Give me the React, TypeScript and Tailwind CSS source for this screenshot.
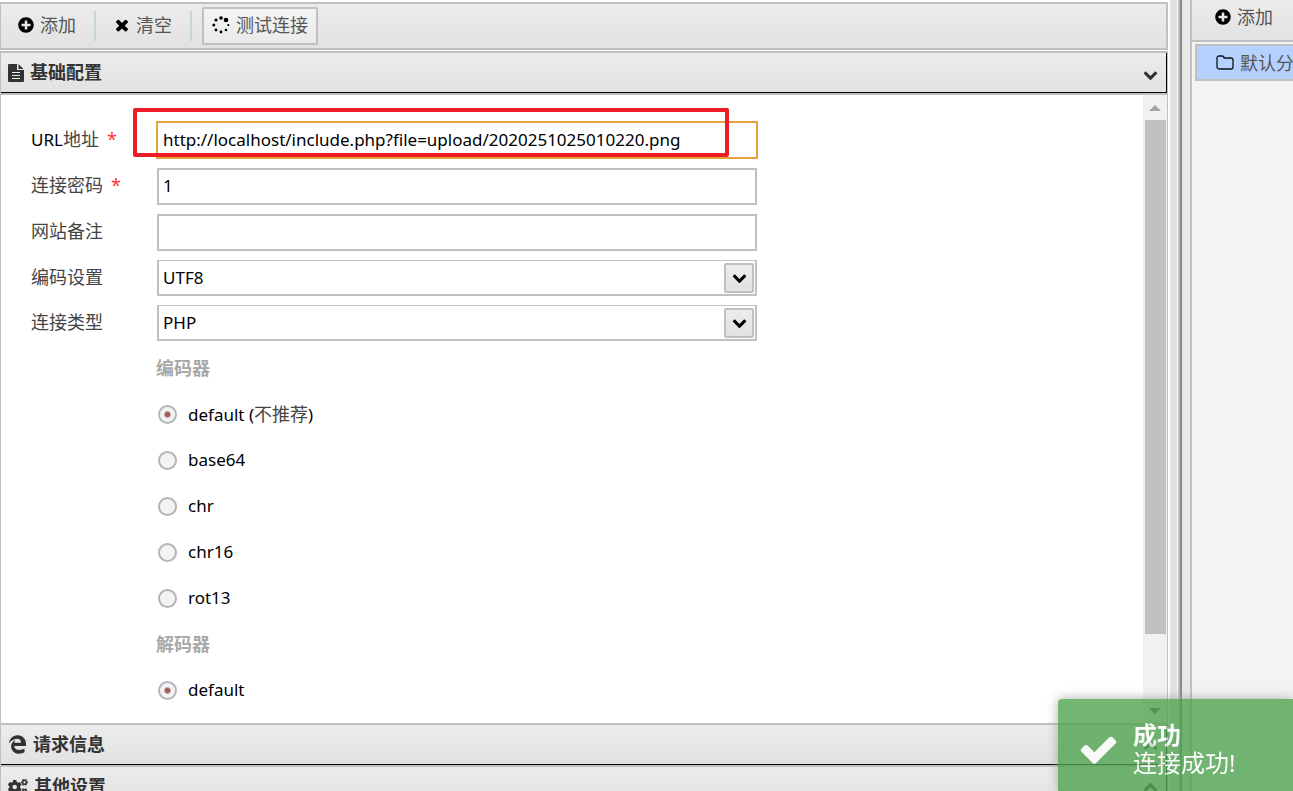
import type { ReactNode } from "react";
import { FaCogs, FaEdgeLegacy, FaPlusCircle } from "react-icons/fa";

const encoders = [{ name: "default", note: "不推荐" }, { name: "base64" }, { name: "chr" }, { name: "chr16" }, { name: "rot13" }];
const decoders = [{ name: "default" }];

function Icon({ d, size, className }: { d: string; size: number; className?: string }) {
  return (
    <svg width={size} height={size} viewBox="0 0 1792 1792" fill="currentColor" className={className}>
      <path d={d} />
    </svg>
  );
}

const timesPath =
  "M1490 1322q0 40-28 68l-136 136q-28 28-68 28t-68-28l-294-294-294 294q-28 28-68 28t-68-28l-136-136q-28-28-28-68t28-68l294-294-294-294q-28-28-28-68t28-68l136-136q28-28 68-28t68 28l294 294 294-294q28-28 68-28t68 28l136 136q28 28 28 68t-28 68l-294 294 294 294q28 28 28 68z";
const checkPath =
  "M1671 566q0 40-28 68l-724 724-136 136q-28 28-68 28t-68-28l-136-136-362-362q-28-28-28-68t28-68l136-136q28-28 68-28t68 28l294 295 656-657q28-28 68-28t68 28l136 136q28 28 28 68z";
const chevronPath =
  "M1683 808l-742 741q-19 19-45 19t-45-19l-742-741q-19-19-19-45.5t19-45.5l166-165q19-19 45-19t45 19l531 531 531-531q19-19 45-19t45 19l166 165q19 19 19 45.5t-19 45.5z";

function Spinner() {
  return (
    <svg width="18" height="18" viewBox="0 0 18 18" className="text-black" fill="currentColor">
      <circle cx="9" cy="2" r="1.8" />
      <circle cx="14" cy="4" r="2.3" />
      <circle cx="16.300" cy="9" r="1.1" />
      <circle cx="14" cy="14" r="1.3" />
      <circle cx="9" cy="16" r="1.4" />
      <circle cx="4" cy="14" r="1.4" />
      <circle cx="1.800" cy="9" r="1.5" />
      <circle cx="4" cy="4" r="1.600" />
    </svg>
  );
}

function FileText() {
  return (
    <svg width="16" height="18" viewBox="0 0 16 18">
      <path d="M1 0h8v6h7v11a1 1 0 0 1-1 1H1a1 1 0 0 1-1-1V1a1 1 0 0 1 1-1zM10.500 0 15.500 5h-5z" fill="#333" />
      <path d="M4 8.500h8M4 11.500h8M4 14.500h8" stroke="#eee" strokeWidth="1.200" />
    </svg>
  );
}

function Folder() {
  return (
    <svg width="18" height="18" viewBox="0 0 18 18" fill="none" stroke="#111" strokeWidth="1.300" strokeLinejoin="round">
      <path d="M1 4a2 2 0 0 1 2-2h3a2 2 0 0 1 2 2h7a2 2 0 0 1 2 2v7a2 2 0 0 1-2 2H3a2 2 0 0 1-2-2z" />
    </svg>
  );
}

function ToolButton({ icon, text }: { icon: ReactNode; text: string }) {
  return (
    <button type="button" className="flex h-10 items-center gap-1.5 pr-3 pl-3 pb-0.5 text-lg text-[#555]">
      <span className="flex w-4 justify-center text-black">{icon}</span>
      {text}
    </button>
  );
}

function PanelHeader({ icon, title, open }: { icon: ReactNode; title: string; open?: boolean }) {
  return (
    <div className="shrink-0 border-y-2 border-r border-[#c0c0c0]">
      <button
        type="button"
        className="flex h-10 w-full items-center gap-1.5 border-r border-b border-black bg-linear-to-b from-[#ececec] to-[#e2e2e2] pl-[7px] text-lg font-bold text-[#333]"
      >
        {icon}
        <span className="flex-1 pb-0.5 text-left">{title}</span>
        <span className="mt-1 mr-2">
          <Icon d={chevronPath} size={15} className={open ? "" : "rotate-180"} />
        </span>
      </button>
    </div>
  );
}

function TextRow({ id, label, value, required, focused }: { id: string; label: ReactNode; value: string; required?: boolean; focused?: boolean }) {
  return (
    <div className="flex h-[46px] items-center">
      <label htmlFor={id} className="w-[126px] shrink-0 pb-0.5 text-lg text-[#444]">
        {label}
        {required && <span className="ml-2 text-[#f33]">*</span>}
      </label>
      <input
        id={id}
        defaultValue={value}
        className={
          focused
            ? "h-9 w-[600px] border border-[#c0c0c0] px-[5px] pb-0.5 text-black outline-2 -outline-offset-1 outline-[#e5a33a]"
            : "h-[37px] w-[600px] border-2 border-[#c0c0c0] px-1 pb-0.5 text-black outline-none"
        }
      />
    </div>
  );
}

function SelectRow({ id, label, value }: { id: string; label: string; value: string }) {
  return (
    <div className="flex h-[45px] items-center">
      <label htmlFor={id} className="w-[126px] shrink-0 pb-0.5 text-lg text-[#444]">
        {label}
      </label>
      <div className="relative w-[600px]">
        <select id={id} className="block h-9 w-full appearance-none border-2 border-t border-[#c0c0c0] bg-white px-1 pt-0.5 text-black">
          <option>{value}</option>
        </select>
        <span className="pointer-events-none absolute top-[3px] right-[3px] flex h-[30px] w-[30px] items-center justify-center rounded-xs border-2 border-[#c0c0c0] bg-linear-to-b from-[#ececec] to-[#e2e2e2] text-black">
          <Icon d={chevronPath} size={15} />
        </span>
      </div>
    </div>
  );
}

function RadioGroup({ name, title, items }: { name: string; title: string; items: { name: string; note?: string }[] }) {
  return (
    <fieldset className="pl-[125px]">
      <legend className="contents">
        <span className="flex h-[46px] items-center text-lg font-bold text-[#a8a8a8]">{title}</span>
      </legend>
      {items.map((item, i) => (
        <label key={item.name} className="flex h-[46px] items-center gap-[11px] pl-0.5 text-black">
          <input
            type="radio"
            name={name}
            defaultChecked={i === 0}
            className="h-[19px] w-[19px] appearance-none rounded-full border-2 border-[#b8b3b3] bg-[#f3f3f3] checked:border-[#b4b6bf] checked:bg-[radial-gradient(circle,#a05a5a_0_2px,#f3f3f3_4px)]"
          />
          <span>
            {item.name}
            {item.note && (
              <>
                {" "}
                (<span className="text-lg text-[#444]">{item.note}</span>)
              </>
            )}
          </span>
        </label>
      ))}
    </fieldset>
  );
}

function Scrollbar() {
  return (
    <div className="flex w-6 shrink-0 flex-col items-center bg-[#f1f1f1] px-px">
      <div className="flex h-[25px] items-center">
        <svg width="12" height="6" viewBox="0 0 12 6" fill="#a3a3a3">
          <path d="M6 0 12 6H0z" />
        </svg>
      </div>
      <div className="w-full flex-1 pl-px">
        <div className="h-[89%] bg-[#c1c1c1]" />
      </div>
      <div className="flex h-[25px] items-center">
        <svg width="12" height="6" viewBox="0 0 12 6" fill="#505050">
          <path d="M0 0H12L6 6z" />
        </svg>
      </div>
    </div>
  );
}

export default function App() {
  return (
    <div className="flex h-screen overflow-hidden bg-white font-['Noto_Sans','Noto_Sans_CJK_SC',sans-serif] text-[17px]">
      <main className="flex min-w-0 flex-1 flex-col pt-0.5">
        <div className="mb-px flex h-12 shrink-0 items-center border-2 border-l border-[#c0c0c0] bg-linear-to-b from-[#ececec] to-[#e2e2e2] pl-[5px]">
          <ToolButton icon={<FaPlusCircle size={16} />} text="添加" />
          <div className="mx-1.5 h-[30px] w-0.5 bg-[#c5d5da]" />
          <ToolButton icon={<Icon d={timesPath} size={18} className="shrink-0" />} text="清空" />
          <div className="mx-1.5 h-[30px] w-0.5 bg-[#c5d5da]" />
          <button
            type="button"
            className="ml-1 flex h-[38px] items-center gap-1.5 rounded-xs border-2 border-[#c0c0c0] bg-linear-to-b from-[#f3f3f3] to-[#ebebeb] px-2 pb-0.5 text-lg text-[#555]"
          >
            <Spinner />
            测试连接
          </button>
        </div>

        <div className="flex min-h-0 flex-1 flex-col overflow-hidden border-l border-[#c0c0c0]">
          <PanelHeader icon={<FileText />} title="基础配置" open />
          <div className="flex h-[628px] shrink-0 overflow-hidden border-r border-[#c0c0c0]">
            <form className="relative min-w-0 flex-1 pt-[22px] pl-[30px]">
              <TextRow
                id="url"
                label={
                  <>
                    <span className="text-[17px] text-black">URL</span>地址
                  </>
                }
                value="http://localhost/include.php?file=upload/2020251025010220.png"
                required
                focused
              />
              <TextRow id="pwd" label="连接密码" value="1" required />
              <TextRow id="note" label="网站备注" value="" />
              <SelectRow id="encode" label="编码设置" value="UTF8" />
              <SelectRow id="type" label="连接类型" value="PHP" />
              <RadioGroup name="encoder" title="编码器" items={encoders} />
              <RadioGroup name="decoder" title="解码器" items={decoders} />
              <div className="pointer-events-none absolute top-[13px] left-[132px] h-[49px] w-[596px] rounded-xs border-4 border-[#ee1c25]" />
            </form>
            <Scrollbar />
          </div>
          <PanelHeader icon={<FaEdgeLegacy size={19} />} title="请求信息" />
          <div className="-mt-0.5 shrink-0">
            <PanelHeader icon={<FaCogs size={20} />} title="其他设置" />
          </div>
        </div>
      </main>

      <div className="ml-0.5 flex w-5 shrink-0">
        <div className="w-[7px] bg-[#e2e2e2]" />
        <div className="ml-px w-0.5 bg-[#c0c0c0]" />
        <div className="w-0.5 bg-[#888]" />
        <div className="flex-1 bg-[#e8e8e8]" />
      </div>

      <aside className="w-[103px] shrink-0 overflow-hidden border-l-2 border-[#c0c0c0] bg-[#f3f3f3]">
        <div className="flex h-[42px] items-center border-b-2 border-[#c0c0c0] bg-linear-to-b from-[#ececec] to-[#e2e2e2] pb-1 pl-[23px]">
          <button type="button" className="flex shrink-0 items-center gap-1.5 pr-5 pb-0.5 text-lg text-[#555]">
            <FaPlusCircle size={16} className="text-black" />
            添加
          </button>
          <div className="h-[30px] w-0.5 shrink-0 bg-[#c5d5da]" />
        </div>
        <button
          type="button"
          className="mt-0.5 ml-[3px] flex h-[37px] w-40 items-center gap-1.5 border-2 border-[#c0c0c0] bg-[#b5d2ff] pl-[19px] text-lg text-[#555]"
        >
          <Folder />
          默认分类
        </button>
      </aside>

      <div
        role="status"
        className="fixed right-0 bottom-0 flex h-[92px] w-[235px] items-center gap-3.5 rounded-tl bg-[#51a351] pt-2 pl-5 text-2xl leading-7 text-white opacity-80 shadow-[0_0_12px_#999]"
      >
        <Icon d={checkPath} size={41} />
        <div>
          <div className="font-bold">成功</div>
          <div>连接成功!</div>
        </div>
      </div>
    </div>
  );
}
